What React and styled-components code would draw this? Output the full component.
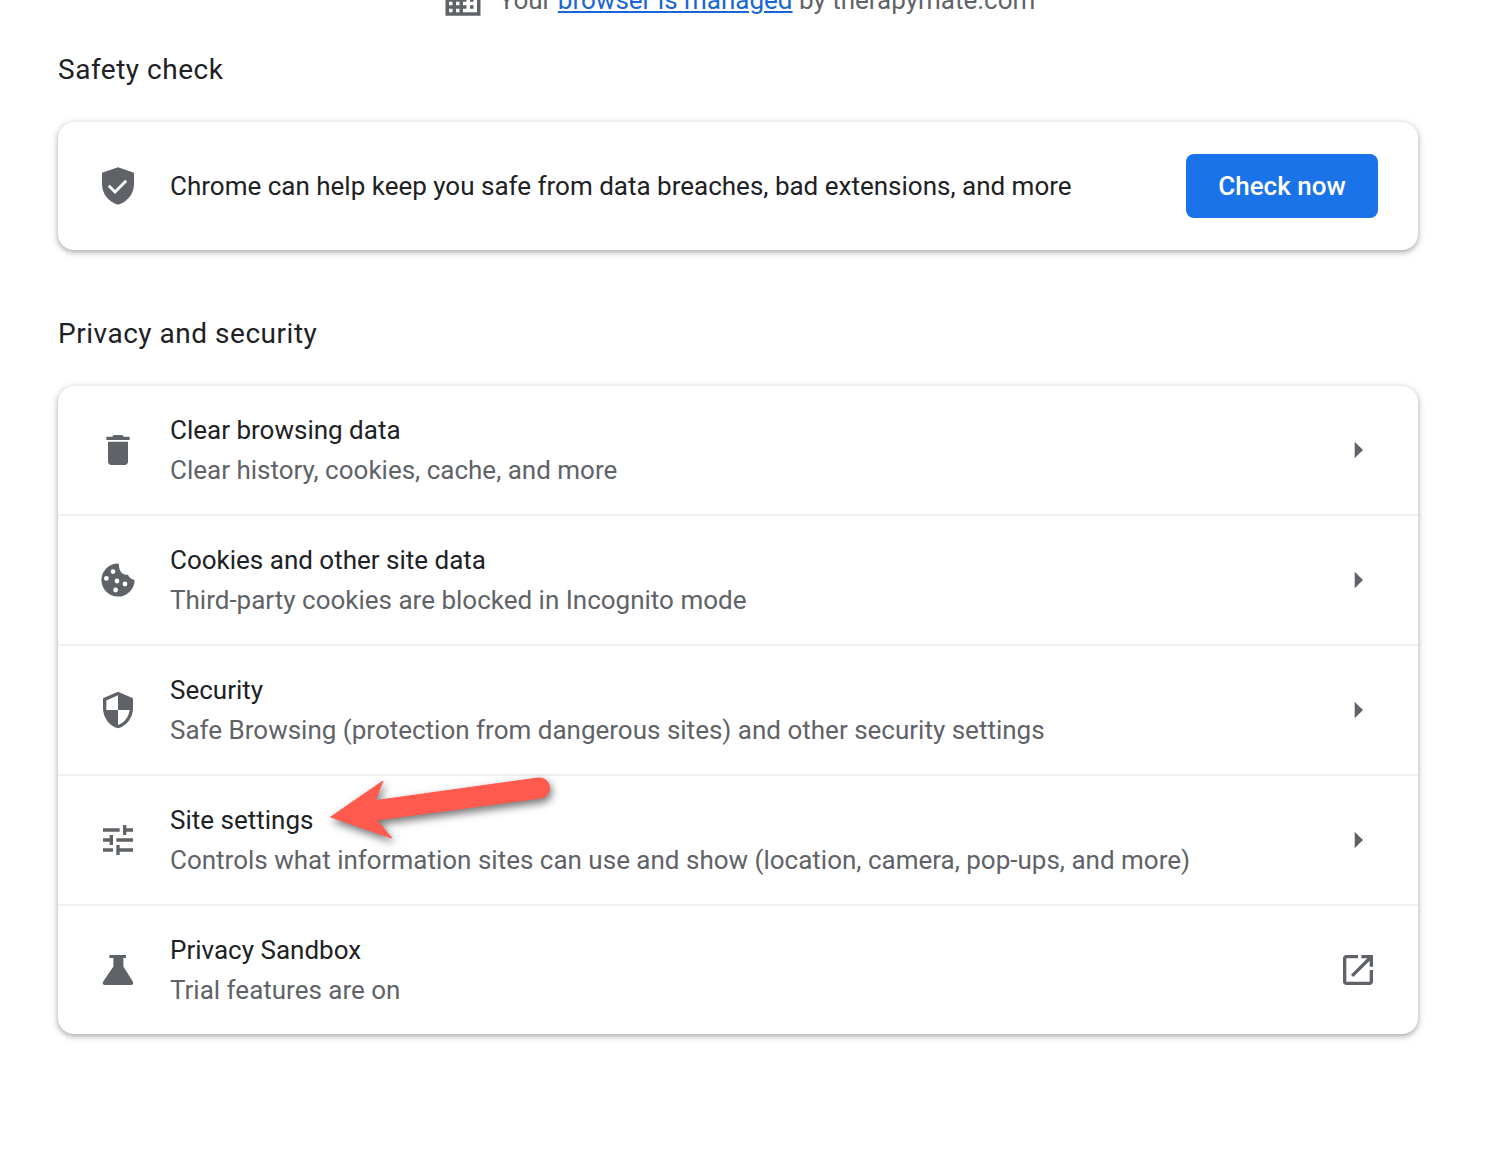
import styled, { createGlobalStyle } from "styled-components";

const GlobalStyle = createGlobalStyle`
  html, body {
    margin: 0;
    height: 100%;
    overflow: hidden;
    background: #fff;
  }
  body {
    font-family: Roboto, "Liberation Sans", sans-serif;
    color: #202124;
  }
`;

const Page = styled.div`
  width: 1360px;
  margin: -24px 0 0 58px;
`;

const ManagedNotice = styled.div`
  height: 48px;
  display: flex;
  align-items: center;
  justify-content: center;
  gap: 12px;
  padding-right: 2px;
  font-size: 26px;
  color: #5f6368;
`;

const ManagedLink = styled.a`
  color: #1967d2;
  text-decoration: underline;
`;

const SectionTitle = styled.h2`
  margin: ${(p) => p.$top}px 0 ${(p) => p.$bottom}px;
  height: 34px;
  line-height: 34px;
  font-size: 28px;
  font-weight: 400;
  letter-spacing: 0.52px;
  color: #202124;
`;

const Card = styled.section`
  background: #fff;
  border-radius: 16px;
  box-shadow: 0 2px 4px rgba(60, 64, 67, 0.3), 0 2px 6px 2px rgba(60, 64, 67, 0.15);
`;

const Row = styled.div`
  position: relative;
  display: flex;
  align-items: center;
  height: 128px;
  padding: 0 36px;
  & + & {
    border-top: 2px solid #f0f0f0;
  }
`;

const IconSlot = styled.div`
  flex: none;
  width: 48px;
  height: 48px;
  display: flex;
  align-items: center;
  justify-content: center;
  color: #5f6368;
`;

const RowBody = styled.div`
  flex: 1;
  margin-left: 28px;
  min-width: 0;
`;

const RowTitle = styled.div`
  font-size: 26px;
  line-height: 40px;
  color: #202124;
`;

const RowSub = styled.div`
  font-size: 26px;
  line-height: 40px;
  color: #5f6368;
`;

const CheckButton = styled.button`
  flex: none;
  width: 192px;
  height: 64px;
  margin-right: 4px;
  border: none;
  border-radius: 8px;
  background: #1a73e8;
  color: #fff;
  font-family: inherit;
  font-size: 26px;
  font-weight: 500;
`;

const Pointer = styled.svg`
  position: absolute;
  left: 262px;
  top: 0;
  overflow: visible;
  filter: drop-shadow(2px 4px 4px rgba(0, 0, 0, 0.55));
`;

const Glyph = ({ size = 48, d }) => (
  <svg width={size} height={size} viewBox="0 0 24 24" fill="currentColor" aria-hidden="true">
    <path d={d} fillRule="evenodd" />
  </svg>
);

const paths = {
  domain:
    "M12 7V3H2v18h20V7H12zM6 19H4v-2h2v2zm0-4H4v-2h2v2zm0-4H4V9h2v2zm0-4H4V5h2v2zm4 12H8v-2h2v2zm0-4H8v-2h2v2zm0-4H8V9h2v2zm0-4H8V5h2v2zm10 12h-8v-2h2v-2h-2v-2h2v-2h-2V9h8v10zm-2-8h-2v2h2v-2zm0 4h-2v2h2v-2z",
  safety:
    "M12 2.6 20 5.4V11c0 4.9-3.3 9-8 10.4C7.300 20 4 15.900 4 11V5.400zM10.500 16 6.900 12.400 7.900 11.400 10.500 14 15.600 8.900 16.600 9.900z",
  trash: "M6 19c0 1.1.9 2 2 2h8c1.1 0 2-.9 2-2V7H6v12zM19 4h-3.500l-1-1h-5l-1 1H5v2h14V4z",
  cookie:
    "M12.300 3.700A8.300 8.300 0 1 0 20.300 12c-1.500-.3-2.800-1-3.300-2.600-1.800.2-3.700-.9-4.200-2.800-.3-1-.3-2-.5-2.900zM9.500 6.600a1.200 1.200 0 1 1 0 2.400 1.200 1.200 0 0 1 0-2.400zM6.200 10a1.200 1.200 0 1 1 0 2.400 1.200 1.200 0 0 1 0-2.400zM11.500 11.300a1.200 1.200 0 1 1 0 2.400 1.200 1.200 0 0 1 0-2.400zM15.500 12.800a1.200 1.200 0 1 1 0 2.400 1.200 1.200 0 0 1 0-2.400zM10.800 15.800a1.200 1.200 0 1 1 0 2.400 1.200 1.200 0 0 1 0-2.400z",
  security:
    "M12 1L3 5v6c0 5.550 3.840 10.740 9 12 5.160-1.260 9-6.450 9-12V5l-9-4zm0 10.990h7c-.53 4.120-3.280 7.790-7 8.940V12H5V6.300l7-3.110v8.800z",
  tune:
    "M3 17v2h6v-2H3zM3 5v2h10V5H3zm10 16v-2h8v-2h-8v-2h-2v6h2zM7 9v2H3v2h4v2h2V9H7zm14 4v-2H11v2h10zm-6-4h2V7h4V5h-4V3h-2v6z",
  flask:
    "M7.700 4.500H16V6h-1.300v4.300l4.600 7.300c.7 1 .2 1.900-1 1.900H5.700c-1.200 0-1.700-.9-1-1.900l5-7.300V6h-2z",
  arrowRight: "M10 17l5-5-5-5v10z",
  openNew:
    "M19 19H5V5h7V3H5c-1.110 0-2 .9-2 2v14c0 1.100.89 2 2 2h14c1.100 0 2-.9 2-2v-7h-2v7zM14 3v2h3.590l-9.830 9.830 1.410 1.410L19 6.410V10h2V3h-7z",
};

const privacyRows = [
  { icon: paths.trash, size: 40, title: "Clear browsing data", sub: "Clear history, cookies, cache, and more" },
  { icon: paths.cookie, size: 48, title: "Cookies and other site data", sub: "Third-party cookies are blocked in Incognito mode" },
  { icon: paths.security, size: 40, title: "Security", sub: "Safe Browsing (protection from dangerous sites) and other security settings" },
  { icon: paths.tune, size: 40, title: "Site settings", sub: "Controls what information sites can use and show (location, camera, pop-ups, and more)", marked: true },
  { icon: paths.flask, size: 48, title: "Privacy Sandbox", sub: "Trial features are on", external: true },
];

function App() {
  return (
    <>
      <GlobalStyle />
      <Page>
        <ManagedNotice>
          <IconSlot>
            <Glyph size={42} d={paths.domain} />
          </IconSlot>
          <span>
            Your <ManagedLink href="#">browser is managed</ManagedLink> by therapymate.com
          </span>
        </ManagedNotice>

        <SectionTitle $top={29} $bottom={35}>Safety check</SectionTitle>
        <Card>
          <Row>
            <IconSlot>
              <Glyph d={paths.safety} />
            </IconSlot>
            <RowBody>
              <RowTitle>Chrome can help keep you safe from data breaches, bad extensions, and more</RowTitle>
            </RowBody>
            <CheckButton>Check now</CheckButton>
          </Row>
        </Card>

        <SectionTitle $top={67} $bottom={35}>Privacy and security</SectionTitle>
        <Card>
          {privacyRows.map((row) => (
            <Row key={row.title}>
              <IconSlot>
                <Glyph size={row.size} d={row.icon} />
              </IconSlot>
              <RowBody>
                <RowTitle>{row.title}</RowTitle>
                <RowSub>{row.sub}</RowSub>
              </RowBody>
              <IconSlot>
                <Glyph size={40} d={row.external ? paths.openNew : paths.arrowRight} />
              </IconSlot>
              {row.marked && (
                <Pointer width="230" height="70" viewBox="0 0 230 70">
                  <path
                    d="M10.700 41 63 5 55 24.700 218 2a10 10 0 0 1 3 20L56.700 44 71.700 62z"
                    fill="#ff5a4d"
                    stroke="#ff5a4d"
                    strokeWidth="1"
                    strokeLinejoin="round"
                  />
                </Pointer>
              )}
            </Row>
          ))}
        </Card>
      </Page>
    </>
  );
}

export default App;
